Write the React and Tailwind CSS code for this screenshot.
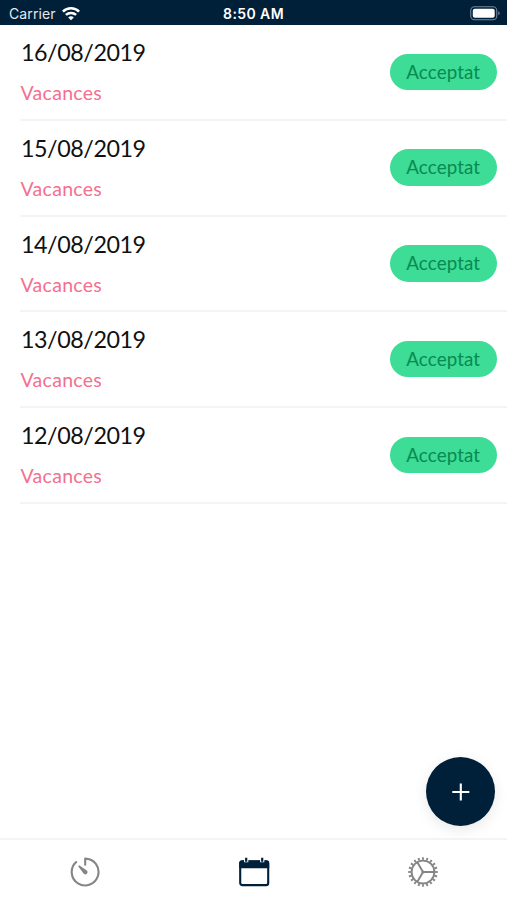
import { useState } from "react";

const requests = [
  { date: "16/08/2019", type: "Vacances", status: "Acceptat" },
  { date: "15/08/2019", type: "Vacances", status: "Acceptat" },
  { date: "14/08/2019", type: "Vacances", status: "Acceptat" },
  { date: "13/08/2019", type: "Vacances", status: "Acceptat" },
  { date: "12/08/2019", type: "Vacances", status: "Acceptat" },
];

const WifiIcon = () => (
  <svg width="18" height="14" viewBox="0 0 18 14" fill="none" stroke="white" strokeWidth="2.5">
    <path d="M0.9 4.6C5.4 0.2 12.6 0.2 17.1 4.6" />
    <path d="M3.9 7.9C6.7 5.2 11.3 5.2 14.1 7.9" />
    <path d="M9 13.2L6.2 10.4C7.7 9 10.3 9 11.8 10.4Z" fill="white" stroke="none" />
  </svg>
);

const BatteryIcon = () => (
  <svg width="31" height="15" viewBox="0 0 31 15" fill="none">
    <rect x="0.75" y="0.75" width="26" height="13" rx="3.8" stroke="#73869a" strokeWidth="1.1" />
    <rect x="2.8" y="2.8" width="21.9" height="8.9" rx="2" fill="white" />
    <path d="M28.3 5.2C30.2 5.9 30.2 8.6 28.3 9.3Z" fill="#73869a" />
  </svg>
);

const TimerIcon = () => (
  <svg width="30" height="30" viewBox="0 0 30 30" fill="none" stroke="#858585" strokeWidth="2.1">
    <path d="M15.2 7.8V1.6A13.4 13.4 0 1 1 6.2 5" strokeLinecap="round" strokeLinejoin="round" />
    <path d="M8.1 9.2L9.2 8.2L16.8 13.4A2.2 2.2 0 0 1 13.8 16.8Z" fill="#858585" stroke="none" />
  </svg>
);

const CalendarIcon = () => (
  <svg width="32" height="30" viewBox="0 0 32 30" fill="none">
    <rect x="2.2" y="4.5" width="28" height="23.6" rx="2.2" stroke="#00203a" strokeWidth="2.1" />
    <path d="M1.2 5.8Q1.2 3.3 3.8 3.3H28.6Q31.2 3.3 31.2 5.8V11.2H1.2Z" fill="#00203a" />
    <path d="M8.2 1V5.2M24.2 1V5.2" stroke="white" strokeWidth="4.2" />
    <path d="M8.2 0.8V4.7M24.2 0.8V4.7" stroke="#00203a" strokeWidth="2.2" />
  </svg>
);

const GearIcon = () => (
  <svg width="32" height="32" viewBox="0 0 32 32" fill="none" stroke="#858585">
    <circle cx="16" cy="16" r="11.4" strokeWidth="1.9" />
    <circle cx="16" cy="16" r="13.4" strokeWidth="2.8" pathLength="120" strokeDasharray="2.6 3.4" strokeDashoffset="1.3" />
    <path d="M16 16H27.3M16 16L10.35 6.2M16 16L10.35 25.8" strokeWidth="1.9" />
    <circle cx="16" cy="16" r="1.5" fill="#858585" stroke="none" />
  </svg>
);

const RequestRow = ({ date, type, status }) => (
  <li className="flex h-[95.75px] items-start justify-between border-b-2 border-[#f4f4f4] pr-[10px]">
    <div className="pt-[12px]">
      <p className="ml-px h-[30px] text-[23.3px] leading-[30px] tracking-[-0.45px] text-[#111111]">{date}</p>
      <p className="mt-[12px] ml-[0.5px] h-[28px] text-[19.5px] leading-[28px] tracking-[0.3px] text-[#f4708f]">{type}</p>
    </div>
    <span className="mt-[28.5px] flex h-[36.5px] w-[107.5px] items-center justify-center rounded-full bg-[#3ddc97] text-[18.8px] tracking-[0.1px] text-[#088a50]">
      {status}
    </span>
  </li>
);

const tabs = [
  { id: "timer", label: "Timer", icon: TimerIcon },
  { id: "calendar", label: "Calendar", icon: CalendarIcon },
  { id: "settings", label: "Settings", icon: GearIcon },
];

const App = () => {
  const [active, setActive] = useState("calendar");

  return (
    <div className="relative flex h-[900px] w-[507px] flex-col overflow-hidden bg-white font-['Lato',sans-serif]">
      <header className="grid h-[25px] shrink-0 grid-cols-3 items-center bg-[#00203a] pl-[9px] pr-[6px] pt-[2px] font-['Inter',sans-serif] text-white">
        <div className="flex items-center gap-[6px]">
          <span className="text-[14px] leading-5 tracking-[0.1px] text-[#e4e9ed]">Carrier</span>
          <WifiIcon />
        </div>
        <span className="pr-[3px] text-center text-[14px] font-semibold leading-5 tracking-[0.4px]">8:50 AM</span>
        <div className="flex justify-end">
          <BatteryIcon />
        </div>
      </header>

      <main className="flex-1">
        <ul className="ml-[20px]">
          {requests.map((request) => (
            <RequestRow key={request.date} {...request} />
          ))}
        </ul>
      </main>

      <button
        aria-label="Add"
        className="absolute right-[12px] bottom-[74px] flex size-[69px] items-center justify-center rounded-full bg-[#00203a] shadow-[0_4px_14px_rgba(0,0,0,0.09)]"
      >
        <svg width="18" height="18" viewBox="0 0 18 18" stroke="white" strokeWidth="2.1">
          <path d="M8.8 0.5V17.5M0.3 9H17.3" />
        </svg>
      </button>

      <nav className="grid h-[62px] shrink-0 grid-cols-3 border-t-2 border-[#f4f4f4] pt-[3px]">
        {tabs.map(({ id, label, icon: Icon }) => (
          <button key={id} aria-label={label} onClick={() => setActive(id)} aria-pressed={active === id} className="flex items-center justify-center">
            <Icon />
          </button>
        ))}
      </nav>
    </div>
  );
};

export default App;
